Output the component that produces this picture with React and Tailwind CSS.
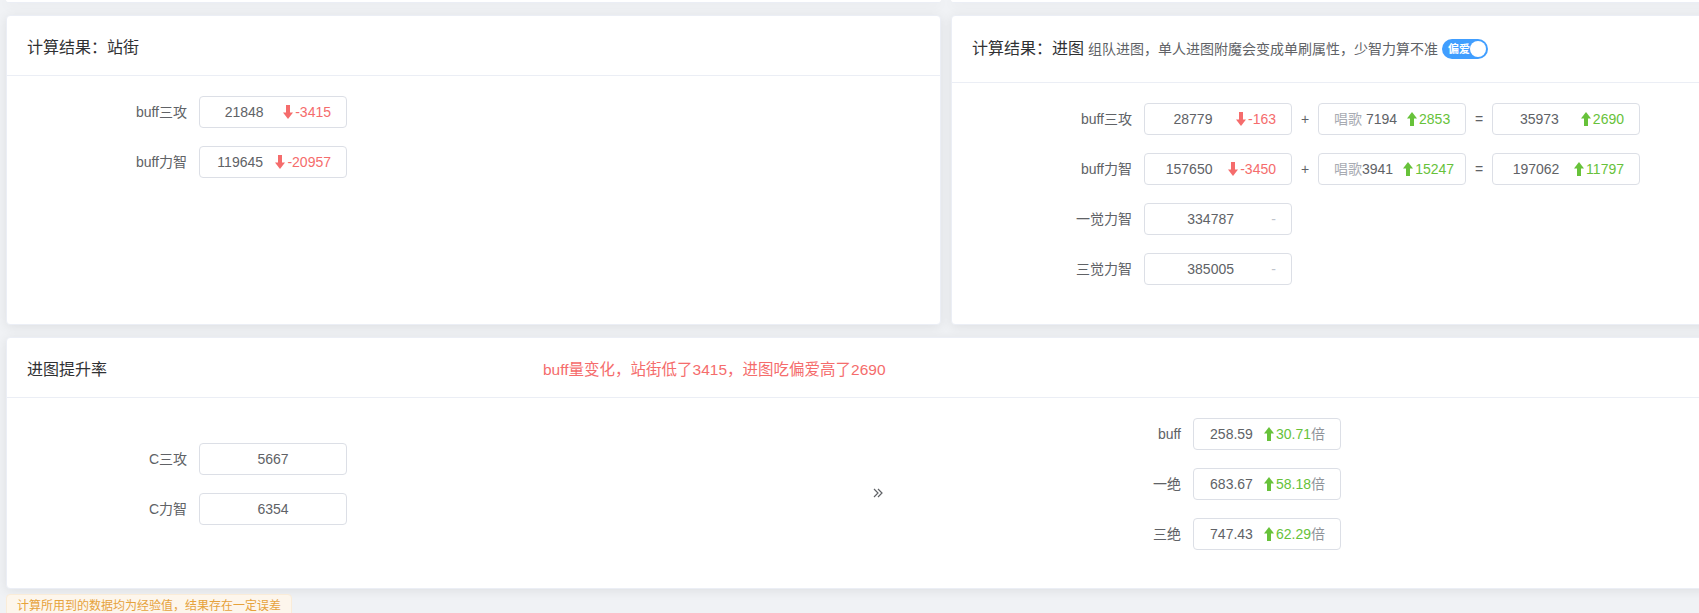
import React from 'react';

const FONT = "font-['Liberation_Sans','Noto_Sans_CJK_SC',sans-serif]";

function Arrow({ up }) {
  return (
    <svg viewBox="0 0 10 14" className="h-[14px] w-[10px] shrink-0" fill="currentColor">
      {up ? (
        <>
          <polygon points="5,0 10,6.5 0,6.5" />
          <rect x="3" y="6" width="4" height="8" />
        </>
      ) : (
        <>
          <rect x="3" y="0" width="4" height="8" />
          <polygon points="0,7.5 10,7.5 5,14" />
        </>
      )}
    </svg>
  );
}

function Diff({ value, up }) {
  return (
    <span className={`flex items-center gap-[2px] ${up ? 'text-[#67c23a]' : 'text-[#f56c6c]'}`}>
      <Arrow up={up} />
      {value}
    </span>
  );
}

function Box({ children, suffix }) {
  return (
    <div className="flex h-8 w-[148px] shrink-0 items-center rounded border border-[#dcdfe6] bg-white px-[15px] text-sm text-[#606266]">
      <div className="flex-1 whitespace-nowrap text-center">{children}</div>
      {suffix && <div className="ml-[10px] flex items-center whitespace-nowrap">{suffix}</div>}
    </div>
  );
}

function Row({ label, children }) {
  return (
    <div className="mb-[18px] flex h-8 items-center">
      <div className="w-[172px] shrink-0 pr-3 text-right text-sm text-[#606266]">{label}</div>
      {children}
    </div>
  );
}

function Card({ className = '', children }) {
  return (
    <div className={`rounded border border-[#ebeef5] bg-white shadow-[0_2px_12px_0_rgba(0,0,0,0.08)] ${className}`}>
      {children}
    </div>
  );
}

function Switch() {
  return (
    <div className="ml-1 flex h-[20px] w-[46px] items-center justify-between rounded-full bg-[#409eff] pl-[6px] pr-[2px]">
      <span className="text-[11px] font-bold leading-none text-white">偏爱</span>
      <span className="h-4 w-4 rounded-full bg-white" />
    </div>
  );
}

const Sep = ({ children }) => (
  <div className="w-[26px] shrink-0 text-center text-sm text-[#606266]">{children}</div>
);

const Times = ({ n }) => (
  <span>
    {n}
    <span className="text-[#909399]">倍</span>
  </span>
);

export default function App() {
  return (
    <div className={`h-[613px] w-full overflow-hidden bg-[#f0f2f5] ${FONT}`}>
      <div className="w-[1900px] pl-[6px]">
        {/* previous row, only its bottom edge is visible */}
        <div className="flex gap-[10px]">
          <div className="h-[3px] w-[935px] rounded-b border-b border-[#ebeef5] bg-white shadow-[0_2px_12px_0_rgba(0,0,0,0.08)]" />
          <div className="h-[3px] w-[935px] rounded-b border-b border-[#ebeef5] bg-white shadow-[0_2px_12px_0_rgba(0,0,0,0.08)]" />
        </div>

        <div className="mt-3 flex h-[310px] gap-[10px]">
          <Card className="w-[935px]">
            <div className="flex h-[60px] items-center border-b border-[#ebeef5] px-5 pt-1 text-base text-[#303133]">
              计算结果：站街
            </div>
            <div className="px-5 pt-5">
              <Row label="buff三攻">
                <Box suffix={<Diff value="-3415" />}>21848</Box>
              </Row>
              <Row label="buff力智">
                <Box suffix={<Diff value="-20957" />}>119645</Box>
              </Row>
            </div>
          </Card>

          <Card className="w-[935px]">
            <div className="flex h-[67px] items-center border-b border-[#ebeef5] px-5 text-[#303133]">
              <span className="text-base">计算结果：进图</span>
              <span className="ml-1 text-sm text-[#606266]">组队进图，单人进图附魔会变成单刷属性，少智力算不准</span>
              <Switch />
            </div>
            <div className="px-5 pt-5">
              <Row label="buff三攻">
                <Box suffix={<Diff value="-163" />}>28779</Box>
                <Sep>+</Sep>
                <Box suffix={<Diff value="2853" up />}>
                  <span className="text-[#a8abb2]">唱歌</span> 7194
                </Box>
                <Sep>=</Sep>
                <Box suffix={<Diff value="2690" up />}>35973</Box>
              </Row>
              <Row label="buff力智">
                <Box suffix={<Diff value="-3450" />}>157650</Box>
                <Sep>+</Sep>
                <Box suffix={<Diff value="15247" up />}>
                  <span className="text-[#a8abb2]">唱歌</span>3941
                </Box>
                <Sep>=</Sep>
                <Box suffix={<Diff value="11797" up />}>197062</Box>
              </Row>
              <Row label="一觉力智">
                <Box suffix={<span className="text-[#c0c4cc]">-</span>}>334787</Box>
              </Row>
              <Row label="三觉力智">
                <Box suffix={<span className="text-[#c0c4cc]">-</span>}>385005</Box>
              </Row>
            </div>
          </Card>
        </div>

        <Card className="mt-3 w-[1880px]">
          <div className="flex h-[60px] items-center border-b border-[#ebeef5] px-5 pt-1">
            <span className="w-[516px] shrink-0 text-base text-[#303133]">进图提升率</span>
            <span className="text-[15.5px] text-[#f56c6c]">buff量变化，站街低了3415，进图吃偏爱高了2690</span>
          </div>
          <div className="flex items-center px-5 py-5">
            <div className="w-[845px] shrink-0">
              <Row label="C三攻">
                <Box>5667</Box>
              </Row>
              <Row label="C力智">
                <Box>6354</Box>
              </Row>
            </div>
            <svg viewBox="0 0 12 12" className="h-3 w-3 shrink-0 text-[#606266]" fill="none" stroke="currentColor" strokeWidth="1.2">
              <polyline points="2,2 6,6 2,10" />
              <polyline points="6,2 10,6 6,10" />
            </svg>
            <div className="ml-[137px]">
              <Row label="buff">
                <Box suffix={<Diff value={<Times n="30.71" />} up />}>258.59</Box>
              </Row>
              <Row label="一绝">
                <Box suffix={<Diff value={<Times n="58.18" />} up />}>683.67</Box>
              </Row>
              <Row label="三绝">
                <Box suffix={<Diff value={<Times n="62.29" />} up />}>747.43</Box>
              </Row>
            </div>
          </div>
        </Card>

        <div className="mt-[5px] inline-flex h-6 items-center rounded border border-[#faecd8] bg-[#fdf6ec] px-[10px] text-xs text-[#e6a23c]">
          计算所用到的数据均为经验值，结果存在一定误差
        </div>
      </div>
    </div>
  );
}
